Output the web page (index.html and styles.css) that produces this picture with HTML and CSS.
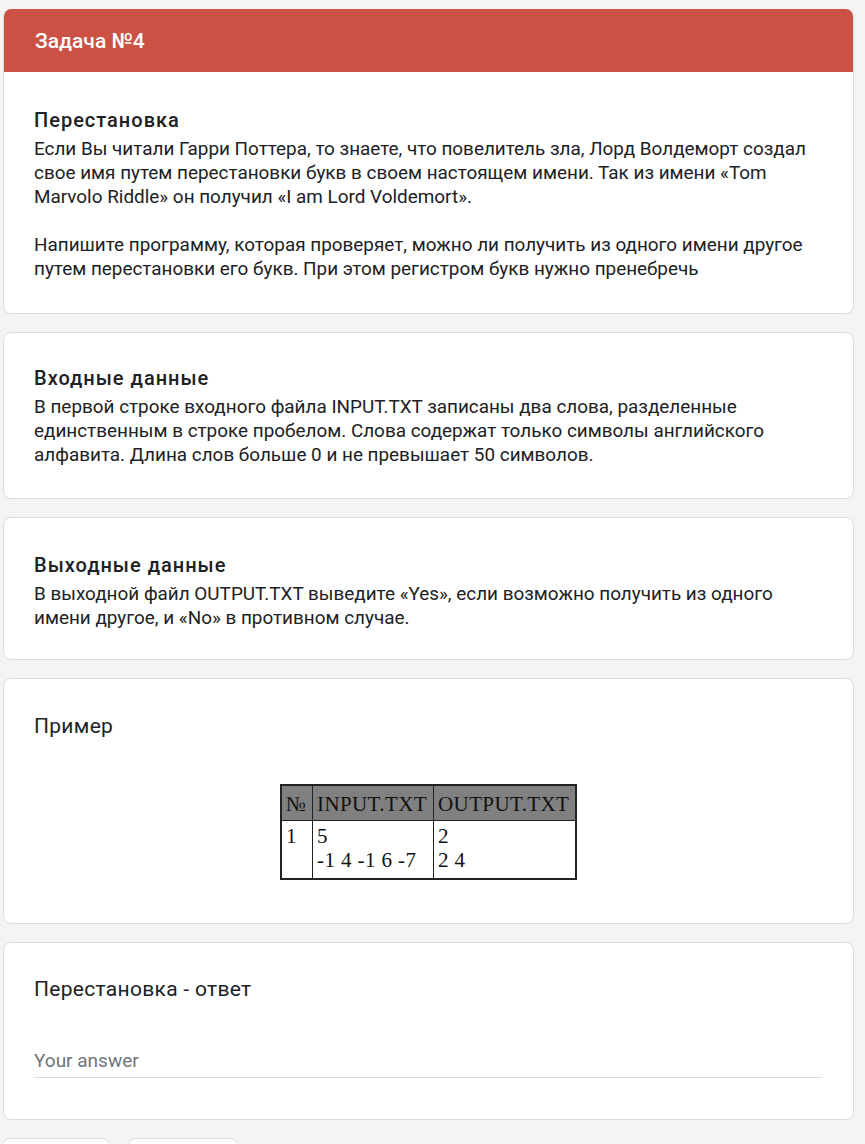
FILE: index.html
```html
<!DOCTYPE html>
<html lang="ru">
<head>
<meta charset="utf-8">
<link rel="stylesheet" href="styles.css">
</head>
<body>
<div class="page">
  <div class="card card-first">
    <div class="banner">Задача №4</div>
    <div class="card-body body-first">
      <div class="heading">Перестановка</div>
      <div class="text">Если Вы читали Гарри Поттера, то знаете, что повелитель зла, Лорд Волдеморт создал свое имя путем перестановки букв в своем настоящем имени. Так из имени «Tom Marvolo Riddle» он получил «I am Lord Voldemort».<br><br>Напишите программу, которая проверяет, можно ли получить из одного имени другое путем перестановки его букв. При этом регистром букв нужно пренебречь</div>
    </div>
  </div>

  <div class="card">
    <div class="card-body body-sec">
      <div class="heading">Входные данные</div>
      <div class="text">В первой строке входного файла INPUT.TXT записаны два слова, разделенные единственным в строке пробелом. Слова содержат только символы английского алфавита. Длина слов больше 0 и не превышает 50 символов.</div>
    </div>
  </div>

  <div class="card">
    <div class="card-body body-sec2">
      <div class="heading">Выходные данные</div>
      <div class="text">В выходной файл OUTPUT.TXT выведите «Yes», если возможно получить из одного имени другое, и «No» в противном случае.</div>
    </div>
  </div>

  <div class="card">
    <div class="card-body body-example">
      <div class="q-title">Пример</div>
      <div class="table-wrap">
        <table class="sample">
          <tr class="head"><th class="c-num">№</th><th class="c-in">INPUT.TXT</th><th class="c-out">OUTPUT.TXT</th></tr>
          <tr><td>1</td><td>5<br>-1 4 -1 6 -7</td><td>2<br>2 4</td></tr>
        </table>
      </div>
    </div>
  </div>

  <div class="card">
    <div class="card-body body-answer">
      <div class="q-title">Перестановка - ответ</div>
      <div class="answer">Your answer</div>
    </div>
  </div>

  <div class="buttons">
    <div class="btn btn-a"></div>
    <div class="btn btn-b"></div>
  </div>
</div>
</body>
</html>
```

FILE: styles.css
```css
html, body {
  margin: 0;
  padding: 0;
  background: #f4f4f4;
}
body {
  font-family: Roboto, "Liberation Sans", Arial, sans-serif;
  color: #202124;
}
.page {
  padding: 9px 11px 0 3px;
  display: flex;
  flex-direction: column;
  gap: 18px;
}
.card {
  background: #fff;
  border: 1px solid #dadce0;
  border-radius: 8px;
  overflow: hidden;
}
.card-first {
  border-top: none;
}
.banner {
  background: #cb5144;
  color: #fff;
  height: 63px;
  display: flex;
  align-items: center;
  padding-left: 31px;
  font-size: 21px;
  font-weight: 500;
}
.card-body {
  padding: 0 30px;
}
.body-first {
  padding-top: 36px;
  padding-bottom: 32px;
}
.body-sec {
  padding-top: 33px;
  padding-bottom: 31px;
}
.body-sec2 {
  padding-top: 35px;
  padding-bottom: 29px;
}
.heading {
  font-size: 20px;
  font-weight: 500;
  letter-spacing: 1px;
  line-height: 24px;
  margin-bottom: 5px;
}
.text {
  font-size: 18.9px;
  line-height: 24px;
}
.q-title {
  font-size: 21px;
  font-weight: 400;
  letter-spacing: 0.3px;
  line-height: 24px;
}
.body-example {
  padding-top: 35px;
  padding-bottom: 43px;
}
.table-wrap {
  display: flex;
  justify-content: center;
  margin-top: 46px;
}
.sample {
  border-collapse: collapse;
  font-family: "Liberation Serif", "Times New Roman", serif;
  font-size: 21px;
  letter-spacing: 0.4px;
  color: #111;
  border: 2px solid #222;
}
.sample th, .sample td {
  border: 1px solid #222;
  text-align: left;
  vertical-align: top;
  padding: 0 4px;
  line-height: 24px;
  font-weight: 400;
}
.sample .head th {
  background: #808080;
  height: 33px;
  vertical-align: middle;
  padding-top: 1px;
}
.sample td {
  padding-top: 3px;
  padding-bottom: 3px;
  height: 51px;
}
.sample .c-num { width: 22px; padding: 0 4px; }
.sample .c-in { width: 112px; }
.sample .c-out { width: 133px; }
.body-answer {
  padding-top: 34px;
  padding-bottom: 41px;
}
.answer {
  margin-top: 48px;
  width: 788px;
  font-size: 19px;
  color: #70757a;
  line-height: 24px;
  padding-bottom: 4px;
  border-bottom: 1px solid #dadce0;
}
.buttons {
  display: flex;
  gap: 20px;
}
.btn {
  height: 30px;
  background: #fff;
  border: 1px solid #dadce0;
  border-radius: 6px;
}
.btn-a { width: 104px; }
.btn-b { width: 106px; }
```
